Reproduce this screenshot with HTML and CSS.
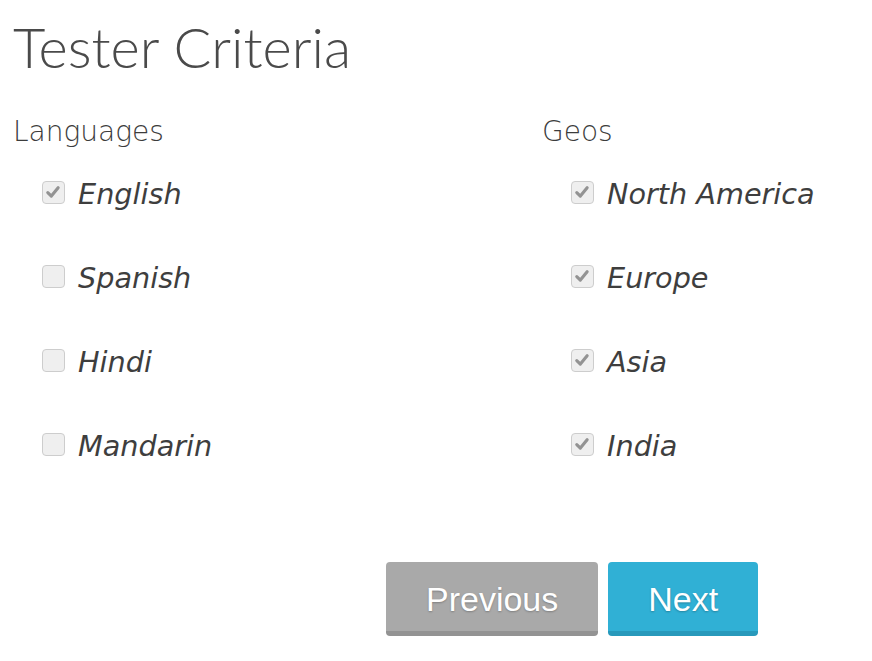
FILE: index.html
```html
<!DOCTYPE html>
<html lang="en">
<head>
    <meta charset="UTF-8">
    <title>Tester Criteria</title>
    <link rel="stylesheet" href="styles.css">
</head>
<body>
    <div class="criteria">
        <h1 class="criteria-title">Tester Criteria</h1>

        <div class="criteria-groups">
            <div class="group">
                <h2 class="group-title">Languages</h2>
                <label class="option">
                    <span class="check is-checked"><svg viewBox="0 0 23 23"><path d="M5.5 12.2 L9.6 16.2 L17.4 6.6"/></svg></span>
                    <span class="option-label">English</span>
                </label>
                <label class="option">
                    <span class="check"></span>
                    <span class="option-label">Spanish</span>
                </label>
                <label class="option">
                    <span class="check"></span>
                    <span class="option-label">Hindi</span>
                </label>
                <label class="option">
                    <span class="check"></span>
                    <span class="option-label">Mandarin</span>
                </label>
            </div>

            <div class="group">
                <h2 class="group-title">Geos</h2>
                <label class="option">
                    <span class="check is-checked"><svg viewBox="0 0 23 23"><path d="M5.5 12.2 L9.6 16.2 L17.4 6.6"/></svg></span>
                    <span class="option-label">North America</span>
                </label>
                <label class="option">
                    <span class="check is-checked"><svg viewBox="0 0 23 23"><path d="M5.5 12.2 L9.6 16.2 L17.4 6.6"/></svg></span>
                    <span class="option-label">Europe</span>
                </label>
                <label class="option">
                    <span class="check is-checked"><svg viewBox="0 0 23 23"><path d="M5.5 12.2 L9.6 16.2 L17.4 6.6"/></svg></span>
                    <span class="option-label">Asia</span>
                </label>
                <label class="option">
                    <span class="check is-checked"><svg viewBox="0 0 23 23"><path d="M5.5 12.2 L9.6 16.2 L17.4 6.6"/></svg></span>
                    <span class="option-label">India</span>
                </label>
            </div>
        </div>

        <div class="actions">
            <button class="btn btn-prev">Previous</button>
            <button class="btn btn-next">Next</button>
        </div>
    </div>
</body>
</html>
```

FILE: styles.css
```css
* {
    margin: 0;
    padding: 0;
    box-sizing: border-box;
}

body {
    font-family: 'DejaVu Sans', sans-serif;
    background: #fff;
    color: #333;
}

.criteria {
    padding: 13px 13px 0;
}

.criteria-title {
    font-family: Lato, 'DejaVu Sans', sans-serif;
    font-size: 56px;
    font-weight: 300;
    line-height: 67px;
    color: #4a4a4a;
    margin-bottom: 35px;
}

.criteria-groups {
    display: grid;
    grid-template-columns: 529px 1fr;
}

.group-title {
    font-size: 28px;
    font-weight: 200;
    line-height: 34px;
    color: #3c3c3c;
    margin-bottom: 27px;
}

.option {
    display: flex;
    align-items: flex-start;
    gap: 13px;
    padding-left: 29px;
    height: 36px;
    margin-bottom: 48px;
}

.option:last-child {
    margin-bottom: 0;
}

.check {
    width: 23px;
    height: 23px;
    margin-top: 5px;
    border: 1.5px solid #cdcdcd;
    border-radius: 4px;
    background: #efefef;
    flex-shrink: 0;
}

.check svg {
    display: block;
    width: 20px;
    height: 20px;
}

.check svg path {
    fill: none;
    stroke: #939393;
    stroke-width: 3.6;
    stroke-linecap: round;
    stroke-linejoin: round;
}

.option-label {
    font-size: 28.7px;
    font-style: italic;
    line-height: 37px;
    color: #3e3e3e;
}

.actions {
    display: flex;
    gap: 10px;
    margin: 98px 0 0 373px;
}

.btn {
    font-family: 'Liberation Sans', Arial, sans-serif;
    font-size: 34px;
    color: #fff;
    text-shadow: 0 1px 2px rgba(0, 0, 0, 0.25);
    border: none;
    border-radius: 4px;
    height: 74px;
    line-height: 70px;
    padding: 2px 40px 0;
    cursor: pointer;
}

.btn-prev {
    background: #a9a9a9;
    border-bottom: 5px solid #939393;
}

.btn-next {
    background: #30b0d5;
    border-bottom: 5px solid #2899bb;
}
```
